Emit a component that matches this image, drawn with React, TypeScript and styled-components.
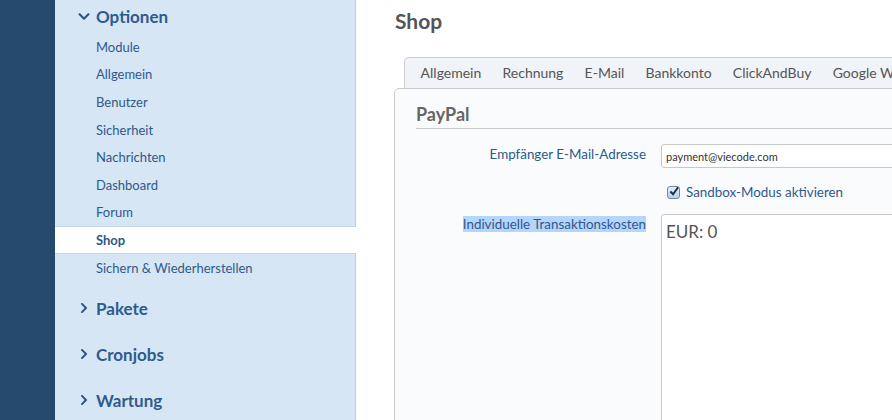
import React from 'react';
import styled, { createGlobalStyle } from 'styled-components';
import { FaChevronDown, FaChevronRight } from 'react-icons/fa';

const GlobalStyle = createGlobalStyle`
  html, body {
    margin: 0;
    padding: 0;
    background: #ffffff;
    overflow: hidden;
  }
  body {
    font-family: Lato, "Open Sans", "Liberation Sans", sans-serif;
  }
`;

const navOptions = [
  'Module',
  'Allgemein',
  'Benutzer',
  'Sicherheit',
  'Nachrichten',
  'Dashboard',
  'Forum',
  'Shop',
  'Sichern & Wiederherstellen',
];

const tabs = ['Allgemein', 'Rechnung', 'E-Mail', 'Bankkonto', 'ClickAndBuy', 'Google Wallet'];

const Checkbox = () => (
  <CheckBoxBox>
    <svg width="11" height="11" viewBox="0 0 11 11">
      <path d="M1.5 5.5 L4.5 8.5 L10 0.8" fill="none" stroke="#1c2f4d" strokeWidth="2.2" />
    </svg>
  </CheckBoxBox>
);

const App = () => {
  return (
    <>
      <GlobalStyle />
      <Page>
        <Rail />
        <Nav>
          <SectionHeader>
            <FaChevronDown size={13} />
            <span>Optionen</span>
          </SectionHeader>
          <SubList>
            {navOptions.map((name) => (
              <SubItem key={name} $active={name === 'Shop'}>
                {name}
              </SubItem>
            ))}
          </SubList>
          {['Pakete', 'Cronjobs', 'Wartung'].map((name) => (
            <SectionHeader key={name} $tall>
              <FaChevronRight size={12} />
              <span>{name}</span>
            </SectionHeader>
          ))}
        </Nav>
        <Main>
          <Title>Shop</Title>
          <TabBar>
            {tabs.map((t) => (
              <Tab key={t}>{t}</Tab>
            ))}
          </TabBar>
          <Panel>
            <PanelHeading>PayPal</PanelHeading>
            <Form>
              <Label>Empfänger E-Mail-Adresse</Label>
              <TextInput defaultValue="payment@viecode.com" />
              <span />
              <CheckRow>
                <Checkbox />
                <span>Sandbox-Modus aktivieren</span>
              </CheckRow>
              <Label>
                <Selected>Individuelle Transaktionskosten</Selected>
              </Label>
              <TextArea defaultValue="EUR: 0" />
            </Form>
          </Panel>
        </Main>
      </Page>
    </>
  );
};

export default App;

const Page = styled.div`
  display: flex;
  width: 892px;
  height: 420px;
  overflow: hidden;
`;

const Rail = styled.div`
  width: 55px;
  flex-shrink: 0;
  background-color: #254a6e;
`;

const Nav = styled.nav`
  width: 300px;
  flex-shrink: 0;
  background-color: #d6e6f5;
  border-right: 1px solid #bcd2e8;
  color: #2f5b8c;
`;

const SectionHeader = styled.div<{ $tall?: boolean }>`
  display: flex;
  align-items: center;
  gap: 6px;
  height: ${(p) => (p.$tall ? '46px' : '33px')};
  padding-left: 23px;
  font-size: 17px;
  font-weight: 700;
  color: #2f5b8c;
  svg {
    width: 12px;
    flex-shrink: 0;
    color: #2a5382;
  }
`;

const SubList = styled.div`
  padding-bottom: 4px;
`;

const SubItem = styled.div<{ $active?: boolean }>`
  display: flex;
  align-items: center;
  height: 27.6px;
  box-sizing: border-box;
  padding-left: 41px;
  font-size: 13px;
  font-weight: ${(p) => (p.$active ? 700 : 400)};
  color: #30598a;
  background-color: ${(p) => (p.$active ? '#ffffff' : 'transparent')};
  border-top: 1px solid ${(p) => (p.$active ? '#c2d6ea' : 'transparent')};
  border-bottom: 1px solid ${(p) => (p.$active ? '#c2d6ea' : 'transparent')};
  margin-right: ${(p) => (p.$active ? '-1px' : '0')};
`;

const Main = styled.main`
  flex: 1;
  min-width: 0;
  overflow: hidden;
  padding-left: 38px;
`;

const Title = styled.h1`
  margin: 0;
  height: 57px;
  line-height: 42px;
  padding-left: 1px;
  font-size: 21px;
  font-weight: 700;
  color: #555555;
`;

const TabBar = styled.div`
  display: flex;
  align-items: center;
  height: 30px;
  margin-left: 10px;
  width: 700px;
  padding-left: 5px;
  background-color: #f0f3f7;
  border: 1px solid #cccccc;
  border-bottom: none;
  border-top-left-radius: 5px;
`;

const Tab = styled.div`
  padding: 0 10.6px;
  font-size: 14px;
  line-height: 28px;
  color: #555555;
  white-space: nowrap;
`;

const Panel = styled.section`
  width: 700px;
  height: 340px;
  padding: 0 21px;
  background-color: #fafbfd;
  border: 1px solid #cccccc;
  border-top-left-radius: 5px;
`;

const PanelHeading = styled.h2`
  margin: 0;
  height: 40px;
  line-height: 50px;
  box-sizing: border-box;
  font-size: 18px;
  font-weight: 700;
  color: #666666;
  border-bottom: 1px solid #cccccc;
`;

const Form = styled.div`
  display: grid;
  grid-template-columns: 230px 1fr;
  column-gap: 15px;
  row-gap: 12px;
  padding-top: 15px;
  align-items: start;
`;

const Label = styled.div`
  text-align: right;
  font-size: 13.4px;
  line-height: 17px;
  padding-top: 2px;
  color: #30598a;
  white-space: nowrap;
`;

const Selected = styled.span`
  background-color: #b4d5fe;
`;

const TextInput = styled.input`
  box-sizing: border-box;
  height: 24px;
  width: 100%;
  padding: 0 4px;
  border: 1px solid #c8c8c8;
  border-radius: 3px;
  background: #ffffff;
  font-family: inherit;
  font-size: 11px;
  color: #333333;
  outline: none;
`;

const CheckRow = styled.div`
  display: flex;
  align-items: center;
  gap: 6px;
  height: 20px;
  margin-top: 2px;
  padding-left: 6px;
  font-size: 13.4px;
  color: #30598a;
`;

const CheckBoxBox = styled.span`
  display: inline-flex;
  align-items: flex-start;
  justify-content: center;
  box-sizing: border-box;
  width: 13px;
  height: 13px;
  border: 1px solid #6f86a3;
  border-radius: 3px;
  background: linear-gradient(#e4eefa, #b9cfe8);
  svg {
    margin-top: -1px;
    margin-left: 1px;
  }
`;

const TextArea = styled.textarea`
  box-sizing: border-box;
  width: 100%;
  height: 220px;
  padding: 6px 4px;
  border: 1px solid #c8c8c8;
  border-radius: 3px;
  background: #ffffff;
  font-family: inherit;
  font-size: 17px;
  color: #555555;
  resize: none;
  outline: none;
`;
